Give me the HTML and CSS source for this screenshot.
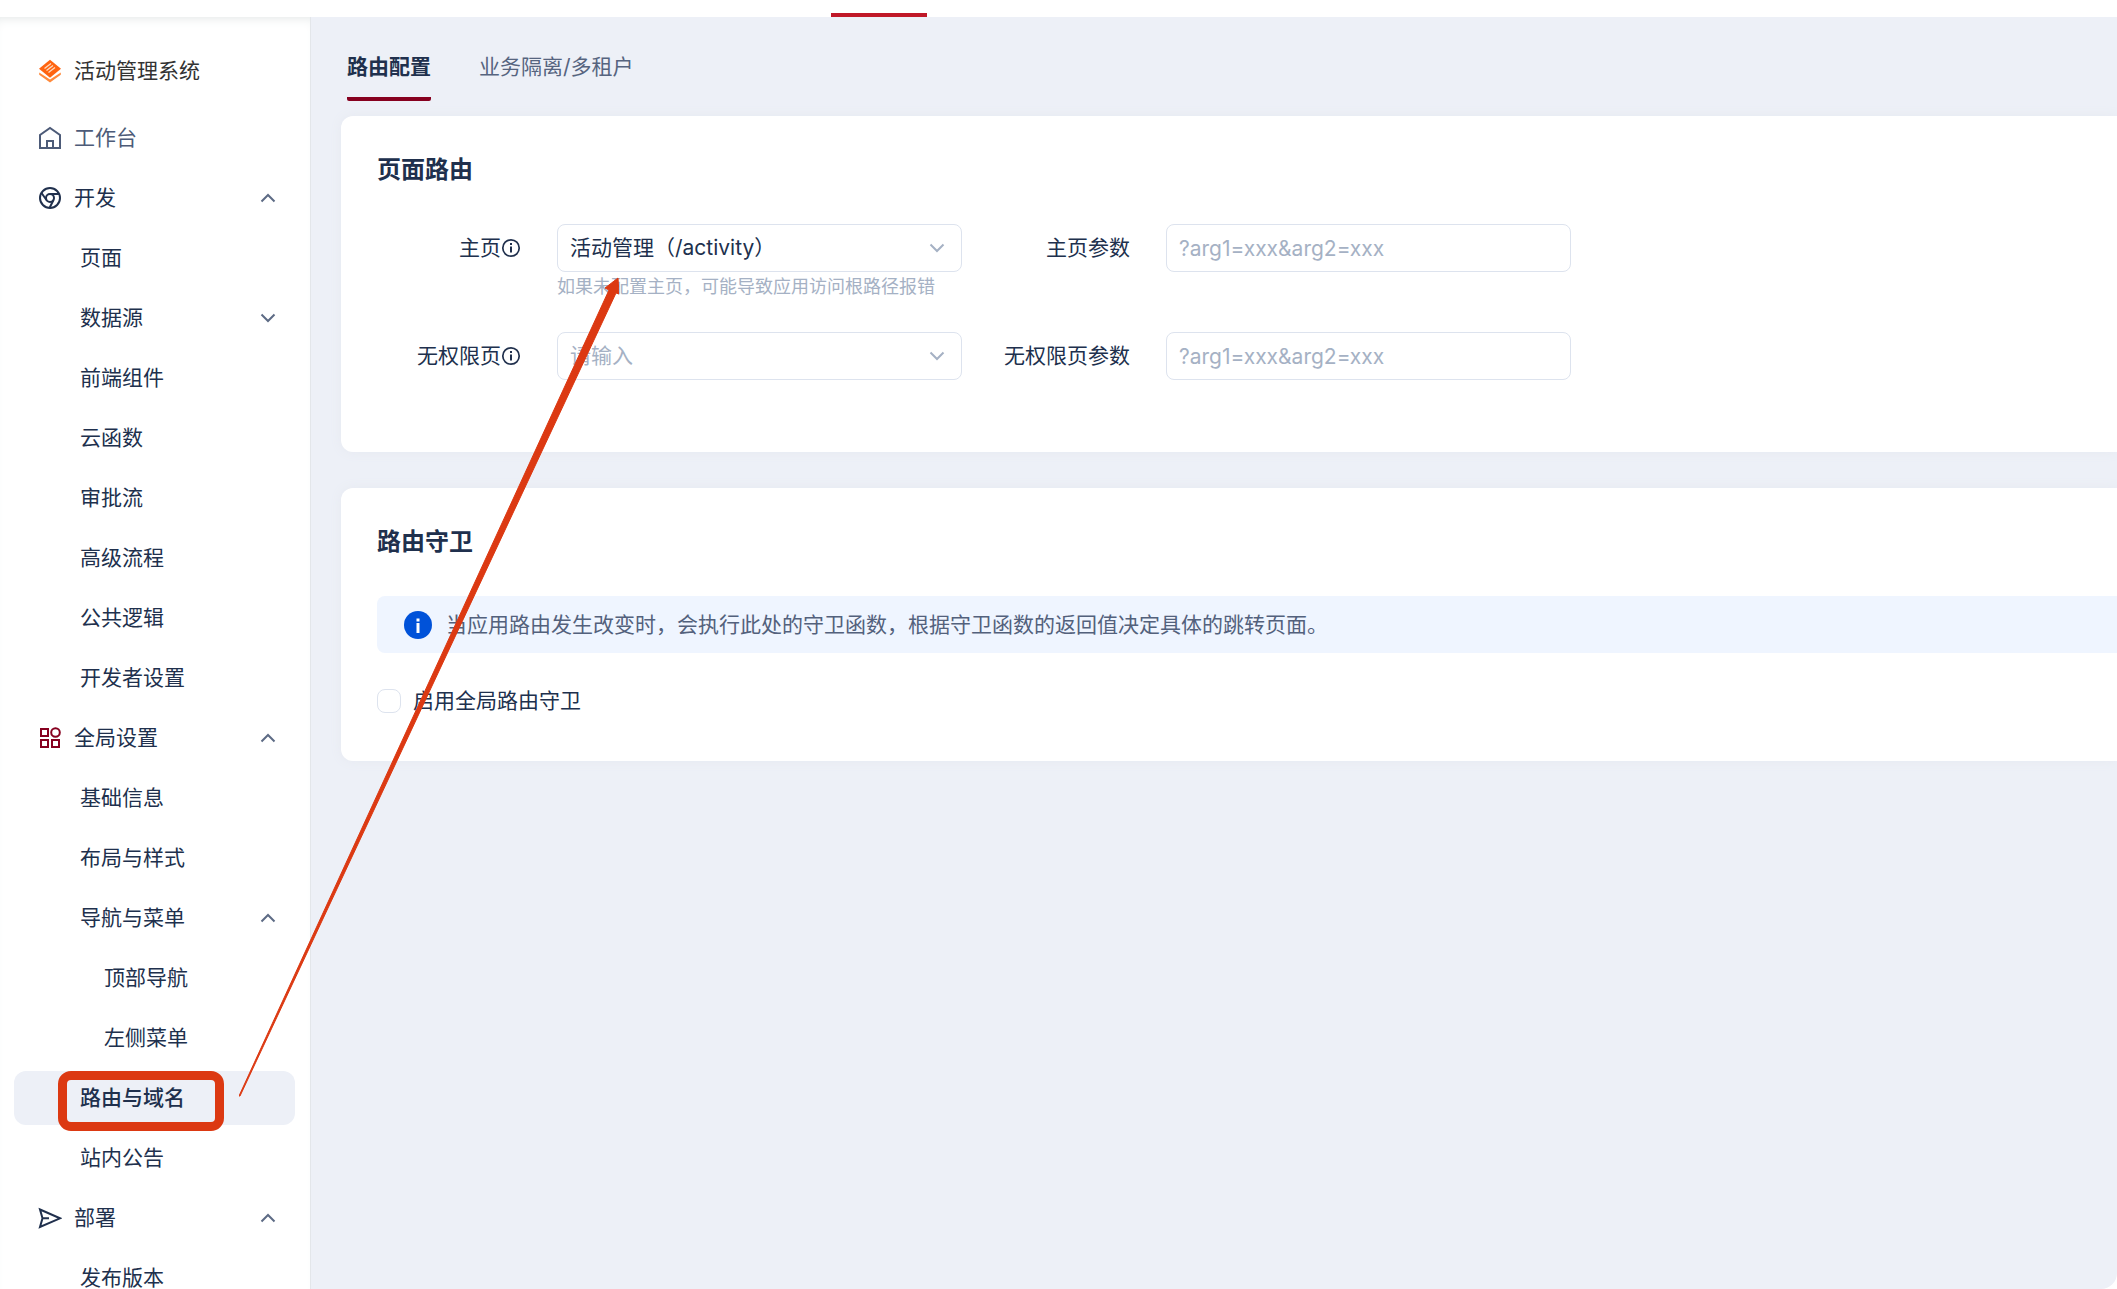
FILE: index.html
```html
<!DOCTYPE html>
<html lang="zh-CN">

<head>
    <meta charset="utf-8" />
    <title>活动管理系统</title>
    <link rel="stylesheet" href="styles.css">
</head>

<body>
    <svg class="defs" aria-hidden="true">
        <symbol id="arrow" viewBox="0 0 16 16">
            <path d="M1.5 11.5L8 5l6.5 6.5" fill="none" stroke="currentColor" stroke-width="2" />
        </symbol>
        <symbol id="tip" viewBox="0 0 20 20">
            <circle cx="10" cy="10" r="8.2" fill="none" stroke="currentColor" stroke-width="1.7" />
            <path d="M9 5h2v2H9zM9 8.500h2v6H9z" fill="currentColor" />
        </symbol>
    </svg>

    <header class="header">
        <span class="header-active"></span>
    </header>

    <div class="layout">
        <aside class="sidebar">
            <div class="brand">
                <svg class="icon" viewBox="0 0 24 24">
                    <path d="M1.2 13.5L12 20.6l10.800-7.100v2.300L12 23.500 1.200 15.800z" fill="#ff8a3c" />
                    <path d="M12 .8L23 9.800 12 18.800 1 9.800z" fill="#ff6410" />
                    <path d="M6.500 9.500l6.500-5M8.500 11.500l6.500-5M10.500 13.500l6.500-5" stroke="#ffd9bf" stroke-width="1.4" />
                </svg>
                <span>活动管理系统</span>
            </div>
            <nav>
                <ul class="menu">
                    <li><a class="item muted" href="#">
                        <svg class="icon" viewBox="0 0 24 24">
                            <path d="M2 22V9l10-7 10 7v13zM9 22v-7h6v7" fill="none" stroke="currentColor" stroke-width="2" />
                        </svg>工作台</a></li>
                    <li><a class="item" href="#">
                        <svg class="icon" viewBox="0 0 24 24" fill="none" stroke="currentColor" stroke-width="2">
                            <circle cx="12" cy="12" r="10" />
                            <circle cx="12" cy="12" r="4" />
                            <path d="M12 8h9M8.500 14L3.500 7M15.500 14L11.500 22" />
                        </svg>开发<svg class="fold"><use href="#arrow" /></svg></a></li>
                    <li><a class="item sub" href="#">页面</a></li>
                    <li><a class="item sub" href="#">数据源<svg class="fold down"><use href="#arrow" /></svg></a></li>
                    <li><a class="item sub" href="#">前端组件</a></li>
                    <li><a class="item sub" href="#">云函数</a></li>
                    <li><a class="item sub" href="#">审批流</a></li>
                    <li><a class="item sub" href="#">高级流程</a></li>
                    <li><a class="item sub" href="#">公共逻辑</a></li>
                    <li><a class="item sub" href="#">开发者设置</a></li>
                    <li><a class="item" href="#">
                        <svg class="icon red" viewBox="0 0 24 24" fill="none" stroke="currentColor" stroke-width="2">
                            <path d="M3 3h7v7H3zM3 14h7v7H3zM14 14h7v7h-7z" />
                            <circle cx="17.500" cy="6.500" r="4.300" />
                        </svg>全局设置<svg class="fold"><use href="#arrow" /></svg></a></li>
                    <li><a class="item sub" href="#">基础信息</a></li>
                    <li><a class="item sub" href="#">布局与样式</a></li>
                    <li><a class="item sub" href="#">导航与菜单<svg class="fold"><use href="#arrow" /></svg></a></li>
                    <li><a class="item third" href="#">顶部导航</a></li>
                    <li><a class="item third" href="#">左侧菜单</a></li>
                    <li><a class="item sub active" href="#">路由与域名<span class="mark"></span></a></li>
                    <li><a class="item sub" href="#">站内公告</a></li>
                    <li><a class="item" href="#">
                        <svg class="icon" viewBox="0 0 24 24">
                            <path d="M2 3.500L22 12.300 2 21 4.500 12.300zM4.500 12.300h6.500" fill="none" stroke="currentColor" stroke-width="2" />
                        </svg>部署<svg class="fold"><use href="#arrow" /></svg></a></li>
                    <li><a class="item sub" href="#">发布版本</a></li>
                </ul>
            </nav>
        </aside>

        <main class="main">
            <div class="tabs">
                <a class="tab show" href="#">路由配置</a>
                <a class="tab" href="#">业务隔离/多租户</a>
            </div>

            <section class="card">
                <h2>页面路由</h2>
                <form class="form">
                    <label for="home">主页<svg class="tip"><use href="#tip" /></svg></label>
                    <div class="field">
                        <select id="home">
                            <option>活动管理（/activity）</option>
                        </select>
                        <svg class="caret"><use href="#arrow" /></svg>
                        <p class="hint">如果未配置主页，可能导致应用访问根路径报错</p>
                    </div>
                    <label for="home-arg">主页参数</label>
                    <div class="field">
                        <input id="home-arg" type="text" placeholder="?arg1=xxx&amp;arg2=xxx">
                    </div>
                    <label for="deny">无权限页<svg class="tip"><use href="#tip" /></svg></label>
                    <div class="field">
                        <select id="deny" class="empty">
                            <option>请输入</option>
                        </select>
                        <svg class="caret"><use href="#arrow" /></svg>
                    </div>
                    <label for="deny-arg">无权限页参数</label>
                    <div class="field">
                        <input id="deny-arg" type="text" placeholder="?arg1=xxx&amp;arg2=xxx">
                    </div>
                </form>
            </section>

            <section class="card guard">
                <h2>路由守卫</h2>
                <div class="alert">
                    <svg class="info" viewBox="0 0 28 28">
                        <circle cx="14" cy="14" r="14" fill="#0052d9" />
                        <path d="M12.500 7.500h3v3h-3zM12.500 12h3v10h-3z" fill="#fff" />
                    </svg>
                    <span>当应用路由发生改变时，会执行此处的守卫函数，根据守卫函数的返回值决定具体的跳转页面。</span>
                </div>
                <label class="check"><input type="checkbox">启用全局路由守卫</label>
            </section>
        </main>
    </div>

    <!-- 标注箭头 -->
    <svg class="pointer" viewBox="0 0 380 820">
        <path d="M0 819L370 13 366 11 379 1 380 17 377 16 1 819z" fill="#dc3912" stroke="#dc3912" />
    </svg>
</body>

</html>
```

FILE: styles.css
```css
* {
    box-sizing: border-box;
}

body,
ul,
p,
h2 {
    margin: 0;
    padding: 0;
}

body {
    position: relative;
    display: flex;
    flex-direction: column;
    height: 100vh;
    overflow: hidden;
    background: #fff;
    color: #20304d;
    font-family: Inter, "Noto Sans CJK SC", sans-serif;
    font-size: 21px;
    line-height: 30px;
}

li {
    list-style: none;
}

a {
    color: inherit;
    text-decoration: none;
}

.defs {
    position: absolute;
    width: 0;
    height: 0;
}

.header {
    flex: none;
    display: flex;
    align-items: flex-end;
    height: 17px;
    padding-left: 831px;
}

.header-active {
    width: 96px;
    height: 4px;
    background: #c01828;
}

.layout {
    flex: 1;
    display: flex;
    min-height: 0;
}

/* 左侧菜单 */
.sidebar {
    flex: none;
    width: 311px;
    padding: 27px 15px 0 14px;
    border-right: 1px solid #e3e6ea;
    overflow: hidden;
    box-shadow: inset 0 8px 12px -8px #dde2e2;
}

.brand {
    display: flex;
    align-items: center;
    gap: 12px;
    height: 54px;
    margin-bottom: 13px;
    padding-left: 24px;
    color: #333;
}

.icon {
    flex: none;
    width: 24px;
    height: 24px;
}

.menu {
    display: flex;
    flex-direction: column;
    gap: 6px;
}

.item {
    position: relative;
    display: flex;
    align-items: center;
    gap: 12px;
    height: 54px;
    padding: 0 19px 0 24px;
    border-radius: 12px;
}

.sub {
    padding-left: 66px;
}

.third {
    padding-left: 90px;
}

.muted {
    color: #4d5b78;
}

.active {
    background: #edf0f7;
    font-weight: 500;
}

.red {
    color: #86001f;
}

.fold {
    width: 16px;
    height: 16px;
    margin-left: auto;
    color: #5d6b85;
}

.down {
    transform: rotate(180deg);
}

.mark {
    position: absolute;
    top: 0;
    left: 44px;
    width: 166px;
    height: 60px;
    border: 9px solid #dc3912;
    border-radius: 13px;
}

/* 右侧内容 */
.main {
    flex: 1;
    min-width: 0;
    padding-left: 30px;
    background: #edf0f7;
    border-bottom-right-radius: 16px;
}

.tabs {
    display: flex;
    gap: 48px;
    height: 99px;
    padding: 15px 6px;
    color: #56647f;
}

.tab {
    height: 69px;
    padding-top: 20px;
}

.tab.show {
    border-bottom: 4px solid #86001f;
    border-radius: 2px;
    color: #20304d;
    font-weight: 700;
}

.card {
    margin-bottom: 36px;
    padding: 36px 0 72px 36px;
    background: #fff;
    border-radius: 12px 0 0 12px;
    box-shadow: 0 0 12px #e6e9f0;
}

.guard {
    padding-bottom: 45px;
}

h2 {
    font-size: 24px;
    font-weight: 700;
    line-height: 36px;
}

.form {
    display: grid;
    grid-template-columns: 180px minmax(0, 405px) 204px minmax(0, 405px);
    row-gap: 30px;
    margin-top: 36px;
}

.form label {
    display: flex;
    align-items: center;
    justify-content: flex-end;
    height: 48px;
    padding-right: 36px;
}

.tip {
    width: 20px;
    height: 20px;
}

.field {
    position: relative;
}

.field select,
.field input {
    display: block;
    width: 100%;
    height: 48px;
    padding: 0 12px;
    border: 1px solid #dde3ee;
    border-radius: 8px;
    background: #fff;
    color: #20304d;
    font: inherit;
    appearance: none;
}

.field .empty,
.field input::placeholder {
    color: #a5b1c4;
}

.caret {
    position: absolute;
    top: 16px;
    right: 17px;
    width: 16px;
    height: 16px;
    color: #a5b1c4;
    transform: rotate(180deg);
    pointer-events: none;
}

.hint {
    color: #a5b1c4;
    font-size: 18px;
}

.alert {
    display: flex;
    align-items: center;
    gap: 14px;
    height: 57px;
    margin-top: 36px;
    padding-left: 27px;
    background: #eff5ff;
    border-radius: 8px 0 0 8px;
    color: #53617c;
}

.info {
    width: 28px;
    height: 28px;
}

.check {
    display: flex;
    align-items: center;
    gap: 12px;
    height: 30px;
    margin-top: 33px;
}

.check input {
    width: 24px;
    height: 24px;
    margin: 0;
    border: 1px solid #dde3ee;
    border-radius: 8px;
    appearance: none;
}

.pointer {
    position: absolute;
    top: 277px;
    left: 239px;
    width: 380px;
    height: 820px;
    pointer-events: none;
}
```
